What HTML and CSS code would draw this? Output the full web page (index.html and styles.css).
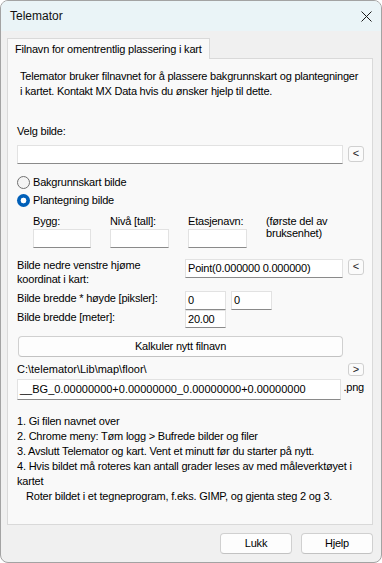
FILE: index.html
```html
<!DOCTYPE html>
<html lang="no">
<head>
<meta charset="utf-8">
<title>Telemator</title>
<link rel="stylesheet" href="styles.css">
</head>
<body>
<div class="window">
  <div class="titlebar">
    <span class="title">Telemator</span>
    <svg class="close" width="11" height="11" viewBox="0 0 11 11"><path d="M0.5 0.5 L10.5 10.5 M10.5 0.5 L0.5 10.5" stroke="#1a1a1a" stroke-width="1" fill="none"/></svg>
  </div>
  <div class="body">
    <div class="tabs"><div class="tab">Filnavn for omentrentlig plassering i kart</div></div>
    <div class="panel">
      <p class="intro">Telemator bruker filnavnet for å plassere bakgrunnskart og plantegninger<br>i kartet. Kontakt MX Data hvis du ønsker hjelp til dette.</p>
      <div class="label velg">Velg bilde:</div>
      <div class="row r-velg">
        <div class="input wide"></div>
        <div class="mini">&lt;</div>
      </div>
      <div class="radio r1"><span class="dot"></span><span>Bakgrunnskart bilde</span></div>
      <div class="radio r2"><span class="dot on"></span><span>Plantegning bilde</span></div>
      <div class="plan">
        <div class="plabel">Bygg:</div>
        <div class="plabel">Nivå [tall]:</div>
        <div class="plabel">Etasjenavn:</div>
        <div class="pnote">(første del av<br>bruksenhet)</div>
        <div class="input pin"></div>
        <div class="input pin"></div>
        <div class="input pin"></div>
      </div>
      <div class="row r-coord">
        <div class="flabel two">Bilde nedre venstre hjøme<br>koordinat i kart:</div>
        <div class="input coord">Point(0.000000 0.000000)</div>
        <div class="mini">&lt;</div>
      </div>
      <div class="row r-pix">
        <div class="flabel">Bilde bredde * høyde [piksler]:</div>
        <div class="input small">0</div>
        <div class="input small second">0</div>
      </div>
      <div class="row r-m">
        <div class="flabel">Bilde bredde [meter]:</div>
        <div class="input small">20.00</div>
      </div>
      <div class="button calc">Kalkuler nytt filnavn</div>
      <div class="row r-path">
        <div class="path">C:\telemator\Lib\map\floor\</div>
        <div class="mini tiny">&gt;</div>
      </div>
      <div class="row r-file">
        <div class="input file">__BG_0.00000000+0.00000000_0.00000000+0.00000000</div>
        <div class="ext">.png</div>
      </div>
      <div class="steps">
        <div>1. Gi filen navnet over</div>
        <div>2. Chrome meny: Tøm logg &gt; Bufrede bilder og filer</div>
        <div>3. Avslutt Telemator og kart. Vent et minutt før du starter på nytt.</div>
        <div>4. Hvis bildet må roteres kan antall grader leses av med måleverktøyet i</div>
        <div>kartet</div>
        <div class="indent">Roter bildet i et tegneprogram, f.eks. GIMP, og gjenta steg 2 og 3.</div>
      </div>
    </div>
    <div class="footer">
      <div class="button fbtn">Lukk</div>
      <div class="button fbtn">Hjelp</div>
    </div>
  </div>
</div>
</body>
</html>
```

FILE: styles.css
```css
* { box-sizing: border-box; }
html, body { margin: 0; padding: 0; background: #ffffff; }
body {
  font-family: "Liberation Sans", Arial, sans-serif;
  font-size: 11px;
  color: #000;
  letter-spacing: -0.2px;
}
.window {
  width: 382px;
  height: 563px;
  border: 1px solid #a3a3a3;
  border-radius: 8px;
  overflow: hidden;
  background: #f0f0f0;
  display: flex;
  flex-direction: column;
}
.titlebar {
  height: 30px;
  flex: none;
  background: #eaf4f7;
  display: flex;
  align-items: center;
  justify-content: space-between;
  padding: 0 9px 0 9px;
}
.title { font-size: 12px; letter-spacing: 0; color: #111; }
.close { display: block; }
.body {
  flex: 1;
  display: flex;
  flex-direction: column;
  padding: 7px 8px 0 6px;
}
.tabs { display: flex; flex: none; }
.tab {
  height: 21px;
  margin-bottom: -1px;
  position: relative;
  z-index: 1;
  background: #f9f9f9;
  border: 1px solid #d9d9d9;
  border-bottom: none;
  padding: 3px 7px 0 7px;
  line-height: 15px;
}
.panel {
  height: 467px;
  flex: none;
  background: #f9f9f9;
  border: 1px solid #d9d9d9;
  padding: 10px 8px 0 9px;
  display: flex;
  flex-direction: column;
}
.intro {
  margin: 0;
  padding-left: 3px;
  line-height: 15px;
  white-space: nowrap;
  letter-spacing: -0.22px;
}
.label { line-height: 15px; }
.velg { margin-top: 25px; }
.row { display: flex; align-items: flex-start; }
.r-velg { margin-top: 6px; }
.input {
  background: #ffffff;
  border: 1px solid #e2e2e2;
  border-bottom-color: #8a8a8a;
  height: 19px;
  padding: 0 2px;
  line-height: 17px;
  white-space: nowrap;
  overflow: hidden;
}
.wide { width: 326px; }
.mini {
  width: 16px;
  height: 16px;
  margin-left: 5px;
  margin-top: 1px;
  background: #fbfbfb;
  border: 1px solid #d0d0d0;
  border-radius: 3px;
  text-align: center;
  line-height: 13px;
  color: #222;
  letter-spacing: 0;
}
.mini.tiny { height: 13px; line-height: 11px; }
.radio {
  display: flex;
  align-items: center;
  height: 18px;
  gap: 3px;
}
.r1 { margin-top: 9px; }
.dot {
  width: 13px;
  height: 13px;
  border-radius: 50%;
  border: 1px solid #707070;
  background: #f4f4f4;
  flex: none;
}
.dot.on {
  border: none;
  background: radial-gradient(circle, #ffffff 0, #ffffff 2.6px, #005fb8 3.2px);
}
.plan {
  display: grid;
  grid-template-columns: 58px 59px 59px auto;
  column-gap: 19px;
  padding-left: 16px;
  margin-top: 5px;
}
.plabel { line-height: 14px; }
.pnote {
  grid-row: 1 / span 2;
  grid-column: 4;
  line-height: 12px;
  padding-top: 1px;
}
.pin { grid-row: 2; margin-top: 1px; }
.flabel { width: 168px; flex: none; line-height: 14px; }
.r-coord { margin-top: 10px; }
.coord { width: 158px; margin-top: 1px; }
.r-pix { margin-top: 5px; }
.small { width: 41px; height: 19px; }
.second { margin-left: 5px; }
.r-m { margin-top: 0; }
.r-m .small { height: 18px; }
.button {
  background: #fdfdfd;
  border: 1px solid #d0d0d0;
  border-bottom-color: #c2c2c2;
  border-radius: 4px;
  text-align: center;
}
.calc {
  margin-top: 8px;
  margin-left: 1px;
  width: 325px;
  height: 21px;
  line-height: 19px;
}
.r-path { margin-top: 5px; }
.path { width: 326px; line-height: 14px; letter-spacing: 0; }
.mini.tiny { margin-top: 1px; }
.r-file { margin-top: 3px; }
.file { width: 326px; height: 21px; line-height: 19px; letter-spacing: 0; }
.ext { margin-left: 2px; line-height: 14px; padding-top: 1px; }
.steps { margin-top: 14px; line-height: 15px; white-space: nowrap; }
.indent { padding-left: 9px; }
.footer {
  display: flex;
  justify-content: flex-end;
  gap: 9px;
  margin-top: 8px;
  padding-right: 0;
}
.fbtn { width: 72px; height: 21px; line-height: 19px; }
```
